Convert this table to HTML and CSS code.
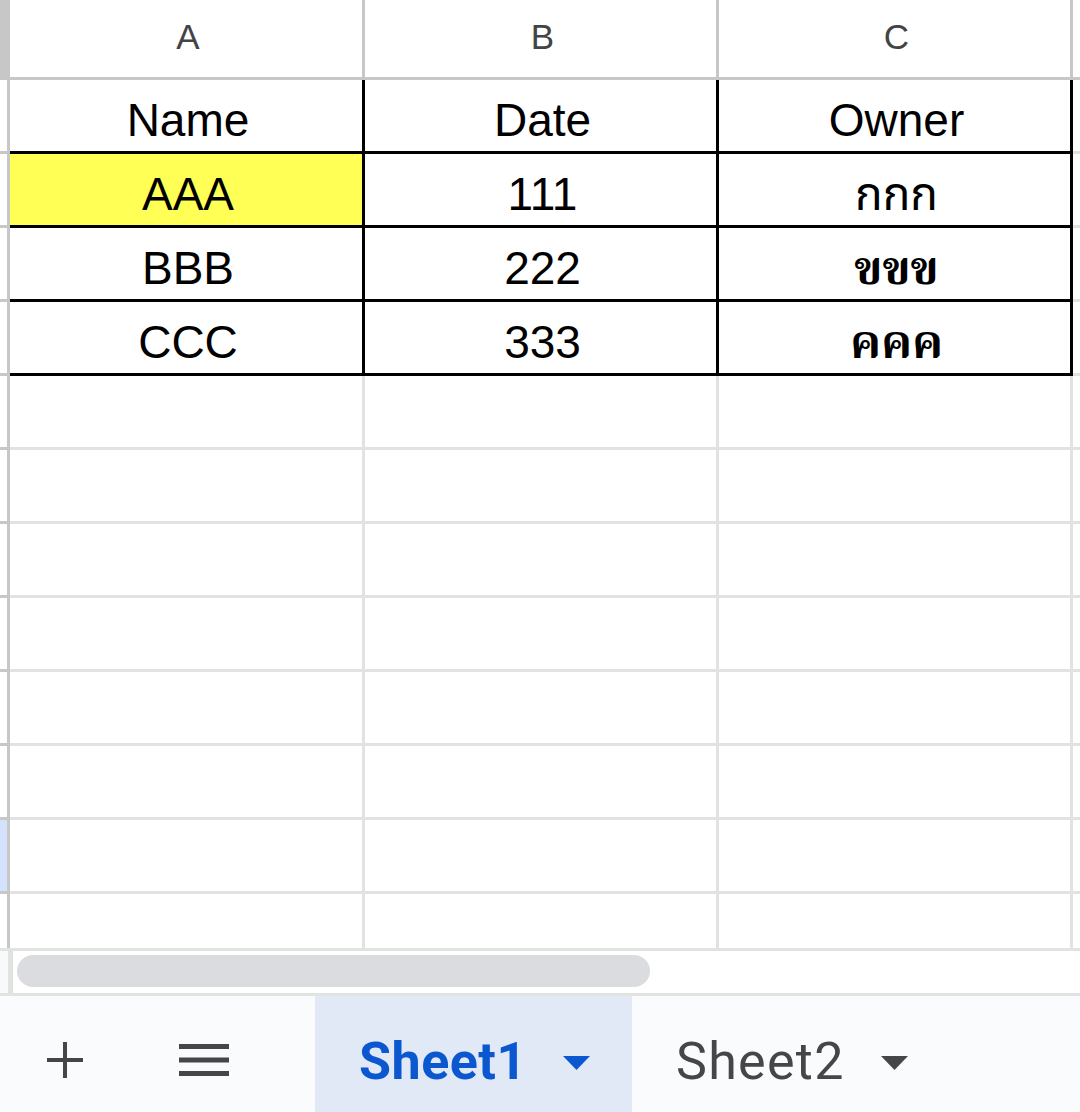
FILE: index.html
```html
<!DOCTYPE html>
<html>
<head>
<meta charset="utf-8">
<link rel="stylesheet" href="styles.css">
</head>
<body>
<div class="app">
  <div class="sheet">
    <div class="corner"></div>
    <div class="colhead">A</div>
    <div class="colhead">B</div>
    <div class="colhead">C</div>
    <div class="colhead last"></div>

    <div class="rowhead"></div>
    <div class="cell b">Name</div>
    <div class="cell b">Date</div>
    <div class="cell b">Owner</div>
    <div class="cell last"></div>

    <div class="rowhead"></div>
    <div class="cell b yellow">AAA</div>
    <div class="cell b">111</div>
    <div class="cell b thai">กกก</div>
    <div class="cell last"></div>

    <div class="rowhead"></div>
    <div class="cell b">BBB</div>
    <div class="cell b">222</div>
    <div class="cell b thai looped">ขขข</div>
    <div class="cell last"></div>

    <div class="rowhead"></div>
    <div class="cell b">CCC</div>
    <div class="cell b">333</div>
    <div class="cell b thai looped">คคค</div>
    <div class="cell last"></div>

    <div class="rowhead"></div>
    <div class="cell"></div><div class="cell"></div><div class="cell"></div><div class="cell last"></div>
    <div class="rowhead"></div>
    <div class="cell"></div><div class="cell"></div><div class="cell"></div><div class="cell last"></div>
    <div class="rowhead"></div>
    <div class="cell"></div><div class="cell"></div><div class="cell"></div><div class="cell last"></div>
    <div class="rowhead"></div>
    <div class="cell"></div><div class="cell"></div><div class="cell"></div><div class="cell last"></div>
    <div class="rowhead"></div>
    <div class="cell"></div><div class="cell"></div><div class="cell"></div><div class="cell last"></div>
    <div class="rowhead"></div>
    <div class="cell"></div><div class="cell"></div><div class="cell"></div><div class="cell last"></div>
    <div class="rowhead selected"></div>
    <div class="cell"></div><div class="cell"></div><div class="cell"></div><div class="cell last"></div>
    <div class="rowhead end"></div>
    <div class="cell end"></div><div class="cell end"></div><div class="cell end"></div><div class="cell last end"></div>
  </div>

  <div class="scrollbar">
    <div class="sb-left"></div>
    <div class="sb-line"></div>
    <div class="sb-thumb"></div>
  </div>

  <div class="tabbar">
    <div class="tool tool-add">
      <svg width="36" height="36" viewBox="0 0 36 36"><path d="M18 0V36M0 18H36" stroke="#444746" stroke-width="4" fill="none"/></svg>
    </div>
    <div class="tool tool-menu">
      <svg width="50" height="32" viewBox="0 0 50 32"><rect x="0" y="0" width="50" height="5" fill="#444746"/><rect x="0" y="13.5" width="50" height="5" fill="#444746"/><rect x="0" y="27" width="50" height="5" fill="#444746"/></svg>
    </div>
    <div class="tab active">
      <span class="tab-label">Sheet1</span>
      <svg class="caret" width="27" height="14" viewBox="0 0 27 14"><polygon points="0,0 27,0 13.5,14" fill="#0b57d0"/></svg>
    </div>
    <div class="tab">
      <span class="tab-label">Sheet2</span>
      <svg class="caret" width="27" height="14" viewBox="0 0 27 14"><polygon points="0,0 27,0 13.5,14" fill="#444746"/></svg>
    </div>
  </div>
</div>
</body>
</html>
```

FILE: styles.css
```css
* { box-sizing: border-box; }
html, body { margin: 0; padding: 0; background: #fff; }
body { width: 1080px; height: 1112px; overflow: hidden; font-family: "Liberation Sans", Arial, sans-serif; }

.app { display: flex; flex-direction: column; height: 1112px; }

.sheet {
  display: grid;
  grid-template-columns: 10px 355px 354px 354px 1fr;
  grid-template-rows: 80px repeat(11, 74px) 1fr;
  height: 948px;
  overflow: hidden;
}

.corner {
  background: #c7c7c7;
}

.colhead {
  border-right: 3px solid #c7c7c7;
  border-bottom: 3px solid #c7c7c7;
  display: flex;
  align-items: center;
  justify-content: center;
  font-family: "Liberation Sans", Arial, sans-serif;
  font-size: 35px;
  color: #444;
  padding-bottom: 4px;
  padding-left: 4px;
}
.colhead.last { border-right: none; }

.rowhead {
  border-right: 3px solid #c7c7c7;
  border-bottom: 3px solid #c7c7c7;
  background: #fff;
}
.rowhead.selected { background: #d3e3fd; }
.rowhead.end { border-bottom: none; }

.cell {
  border-right: 3px solid #e1e3e1;
  border-bottom: 3px solid #e1e3e1;
  display: flex;
  align-items: flex-end;
  justify-content: center;
  font-size: 46px;
  line-height: 53px;
  color: #000;
  padding-bottom: 4px;
  padding-left: 4px;
  white-space: nowrap;
}
.cell.last { border-right: none; }
.cell.end { border-bottom: none; }
.cell.b { border-right-color: #000; border-bottom-color: #000; }
.cell.yellow { background: #ffff55; }
.cell.thai { font-family: "Liberation Sans", "Noto Sans Thai", "Noto Sans", sans-serif; }
.cell.looped {
  font-family: "Noto Serif Thai", "Noto Sans Thai Looped", "Loma", "Garuda", "Norasi", "Tlwg Typo", "Noto Sans Thai", sans-serif;
  font-weight: bold;
  font-size: 47px;
  padding-bottom: 1px;
}

.scrollbar {
  height: 48px;
  border-top: 3px solid #e1e3e1;
  border-bottom: 3px solid #e1e3e1;
  display: flex;
  align-items: flex-start;
  background: #fff;
}
.sb-left { width: 8px; height: 100%; background: #f8f9fa; }
.sb-line { width: 5px; height: 100%; background: #e1e3e1; }
.sb-thumb {
  margin-left: 4px;
  margin-top: 4px;
  width: 633px;
  height: 32px;
  border-radius: 16px;
  background: #dadce0;
}

.tabbar {
  flex: 1;
  background: #f9fbfd;
  display: flex;
  align-items: stretch;
}
.tool {
  display: flex;
  align-items: center;
  justify-content: center;
  padding-top: 12px;
}
.tool-add { width: 130px; }
.tool-menu { width: 148px; margin-right: 37px; }

.tab {
  display: flex;
  align-items: center;
  padding: 12px 0 0 44px;
  font-family: Roboto, "Liberation Sans", sans-serif;
  font-size: 52px;
  color: #444746;
  letter-spacing: 1.3px;
  width: 317px;
  flex: none;
}
.tab.active { background: #e1e9f7; color: #0b57d0; font-weight: 700; letter-spacing: 0.5px; }
.tab-label { line-height: 60px; padding-top: 4px; }
.caret { margin-left: 36px; margin-top: 6px; }
```
